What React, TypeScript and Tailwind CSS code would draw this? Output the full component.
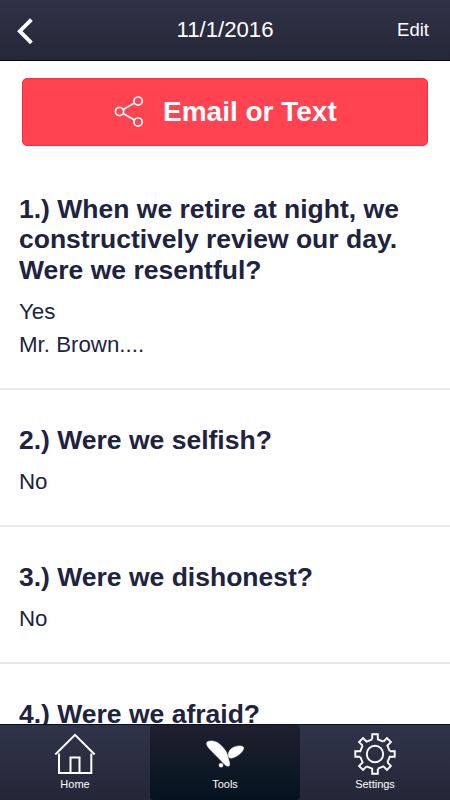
import React, { useState } from "react";

interface Question {
  id: number;
  title: string;
  answers: string[];
}

interface IconProps {
  className?: string;
}

const questions: Question[] = [
  {
    id: 1,
    title: "When we retire at night, we constructively review our day. Were we resentful?",
    answers: ["Yes", "Mr. Brown...."],
  },
  { id: 2, title: "Were we selfish?", answers: ["No"] },
  { id: 3, title: "Were we dishonest?", answers: ["No"] },
  { id: 4, title: "Were we afraid?", answers: ["No"] },
];

const gearAngles = [0, 45, 90, 135, 180, 225, 270, 315];

function BackIcon({ className }: IconProps) {
  return (
    <svg className={className} width="18" height="28" viewBox="0 0 18 28" fill="none" stroke="white" strokeWidth="3.8">
      <path d="M15.4 2.6 3.8 14.2l11.6 11.6" />
    </svg>
  );
}

function ShareIcon({ className }: IconProps) {
  return (
    <svg className={className} width="30" height="32" viewBox="0 0 30 32" fill="none" stroke="white" strokeWidth="1.7">
      <circle cx="5.5" cy="15.5" r="4.1" />
      <circle cx="24.1" cy="5.1" r="4.1" />
      <circle cx="24.1" cy="26.1" r="4.1" />
      <path d="M9.1 13.5 20.5 7.1M9.1 17.5l11.4 6.6" />
    </svg>
  );
}

function HomeIcon() {
  return (
    <svg width="42" height="42" viewBox="0 0 42 42" fill="none" stroke="white" strokeWidth="2">
      <path d="M1.3 21.5 21 1.9l19.7 19.6" />
      <path d="M5 20.5V40h32.3V20.5" />
      <path d="M16.5 40V24.6h9V40" />
    </svg>
  );
}

function ToolsIcon() {
  return (
    <svg width="42" height="42" viewBox="0 0 42 42" fill="white" stroke="white" strokeWidth="0.5">
      <path d="M2.6 10.5C2.2 7.6 9 7 13.5 9.6C18.7 13 23 18.8 23.9 23.5C24.7 27 26.5 31.500 25.200 32.800C24 33.800 21.800 32.800 20.500 31.200L12 22.500C8.500 18.500 2.800 14.500 2.600 10.500Z" />
      <path d="M39.700 14.800C39.500 12 31 12.400 27.500 15.500C24.800 17.900 24 20.500 24.400 22.800C24.700 24.400 26 25.600 28 25.100C34 23.700 39.900 18 39.700 14.800Z" />
      <circle cx="17" cy="32.200" r="2" />
    </svg>
  );
}

function SettingsIcon() {
  return (
    <svg width="42" height="42" viewBox="-21 -21 42 42" fill="none" stroke="white" strokeWidth="1.9">
      {gearAngles.map((angle) => (
        <path key={angle} d="M-2.8-14.7V-19.7H2.8V-14.7L8.42-12.38" transform={`rotate(${angle})`} />
      ))}
      <circle r="8.2" />
    </svg>
  );
}

const tabs = [
  { id: "home", label: "Home", icon: HomeIcon },
  { id: "tools", label: "Tools", icon: ToolsIcon },
  { id: "settings", label: "Settings", icon: SettingsIcon },
];

export default function App() {
  const [activeTab, setActiveTab] = useState("tools");

  return (
    <div className="flex h-screen flex-col overflow-hidden bg-white font-['Liberation_Sans',Arial,sans-serif] text-[#20233f]">
      <header className="grid h-[61px] shrink-0 grid-cols-3 items-center border-b border-[#05060f] bg-linear-to-b from-[#303248] to-[#252837] text-white">
        <button className="pl-4" aria-label="Back">
          <BackIcon className="mt-[2px]" />
        </button>
        <h1 className="text-center text-[22.2px]">11/1/2016</h1>
        <button className="pr-[21px] text-right text-[18.5px]">Edit</button>
      </header>

      <main className="min-h-0 flex-1 overflow-hidden">
        <div className="px-[22px] pt-[17px] pb-[13px]">
          <button className="flex h-[68px] w-full items-center rounded-[5px] border border-[#ff2a42] bg-[#ff4351] pl-[91px] text-white">
            <ShareIcon className="mb-px" />
            <span className="ml-[19px] text-[28px] font-bold">Email or Text</span>
          </button>
        </div>

        {questions.map((question) => (
          <section key={question.id} className="border-b-2 border-[#e8e8e8] px-[19px] pt-[35px] pb-[26.67px]">
            <h2 className="text-[26.5px] leading-[30.33px] font-bold">{`${question.id}.) ${question.title}`}</h2>
            <div className="mt-[10px] text-[22.3px] leading-[33px]">
              {question.answers.map((answer) => (
                <p key={answer}>{answer}</p>
              ))}
            </div>
          </section>
        ))}
      </main>

      <nav className="grid h-[76px] shrink-0 grid-cols-3 border-t border-[#0b0e1c] bg-linear-to-b from-[#303449] to-[#242737] text-white">
        {tabs.map(({ id, label, icon: Icon }) => (
          <button
            key={id}
            onClick={() => setActiveTab(id)}
            className={`flex flex-col items-center rounded-[4px] pt-2 ${
              activeTab === id ? "bg-linear-to-b from-[#20202f] to-[#04131f]" : ""
            }`}>
            <Icon />
            <span className="mt-[2px] text-[11px] leading-[14px]">{label}</span>
          </button>
        ))}
      </nav>
    </div>
  );
}
